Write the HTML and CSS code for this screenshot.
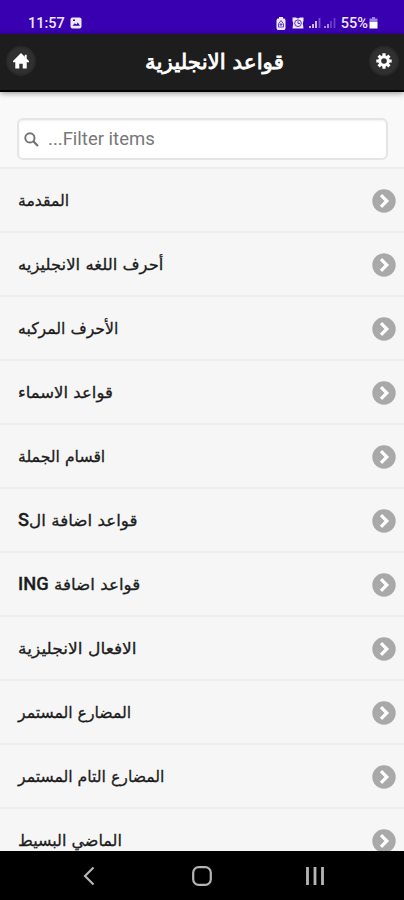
FILE: index.html
```html
<!DOCTYPE html>
<html lang="ar">
<head>
<meta charset="utf-8">
<title>قواعد الانجليزية</title>
<link rel="stylesheet" href="styles.css">
</head>
<body>
<svg class="defs" width="0" height="0" aria-hidden="true">
  <symbol id="go" viewBox="0 0 24 24"><circle cx="12" cy="12" r="11.7" fill="#a9a9a9"/><path d="M9 6.200l5.800 5.800L9 17.800" fill="none" stroke="#fff" stroke-width="3.200"/></symbol>
  <symbol id="signal" viewBox="0 0 13 12"><path d="M1 11V9M4 11V7" stroke="#d9cdf5" stroke-width="1.800"/><path class="upper" d="M7 11V4" stroke="currentColor" stroke-width="1.800"/><path d="M10.500 11V1" stroke="#7a52d2" stroke-width="1.800"/></symbol>
</svg>
<div class="phone">
  <div class="status">
    <span class="time">11:57</span>
    <svg class="photo" viewBox="0 0 12 12" width="12" height="12"><rect x=".5" y=".5" width="11" height="11" rx="2" fill="#eee8fc"/><path d="M2.500 8.800l2.300-2.600 1.500 1.400 1.600-2 2 3.200z" fill="#3a00b3"/><path d="M3 2.500h2v1.500H3z" fill="#3a00b3"/></svg>
    <span class="grow"></span>
    <svg class="saver" viewBox="0 0 10 13" width="10" height="13"><path d="M3 0h4v1.500h1.500L9.500 3v8.500L8.500 13h-7l-1-1.500V3l1-1.500H3z" fill="#eee8fc"/><path d="M5 3.500L2.500 7v3h5V7zM3.500 7.500h3M5 6v3" fill="none" stroke="#5930bd" stroke-width=".9"/></svg>
    <svg class="alarm" viewBox="0 0 12 12" width="12" height="12"><path d="M.5.500H4L6 1.500 8 .5h3.500V4l-.7 2 .7 5.500h-11L1.200 6 .5 4z" fill="#eee8fc"/><circle cx="6" cy="6.200" r="3.300" fill="none" stroke="#5930bd"/><path d="M6 4.200v2.300h2" fill="none" stroke="#5930bd"/></svg>
    <svg class="sig" width="13" height="12"><use href="#signal"/></svg>
    <svg class="sig weak" width="13" height="12"><use href="#signal"/></svg>
    <span class="pct">55%</span>
    <svg class="batt" viewBox="0 0 9 12" width="9" height="12"><path d="M3 0h3v1.500h2.500V5h-8V1.500H3z" fill="#9d80e0"/><path d="M.5 5h8v6.500h-8z" fill="#fff"/></svg>
  </div>
  <header class="bar">
    <span class="round"><svg viewBox="0 0 14 14" width="16" height="16"><path d="M7 0L0 7v1.200h2V13.500h3.500V9.500h3v4H12V8.200h2V7l-2-2V1.500h-1.700v1.700z" fill="#fff"/></svg></span>
    <h1 dir="rtl"><span>قواعد الانجليزية</span></h1>
    <span class="round"><svg viewBox="-8 -8 16 16" width="16" height="16"><circle r="4.300" fill="none" stroke="#fff" stroke-width="3"/><path d="M0-5V-7.700M0 5v2.700M-5 0h-2.700M5 0h2.700M-3.700-3.700l-1.700-1.700M3.700 3.700l1.700 1.700M3.700-3.700l1.700-1.700M-3.700 3.700l-1.700 1.700" stroke="#fff" stroke-width="3.200"/></svg></span>
  </header>
  <main>
    <div class="filter">
      <div class="field">
        <svg viewBox="0 0 14 14" width="15" height="15"><circle cx="5.500" cy="5.500" r="4.300" fill="none" stroke="#727272" stroke-width="1.800"/><path d="M8.700 8.700l4.300 4.300" stroke="#727272" stroke-width="2.100"/></svg>
        <span>...Filter items</span>
      </div>
    </div>
    <ul>
      <li><span class="snug" dir="rtl">المقدمة</span><svg><use href="#go"/></svg></li>
      <li><span class="wide" dir="rtl">أحرف اللغه الانجليزيه</span><svg><use href="#go"/></svg></li>
      <li><span class="snug" dir="rtl">الأحرف المركبه</span><svg><use href="#go"/></svg></li>
      <li><span class="wide" dir="rtl">قواعد الاسماء</span><svg><use href="#go"/></svg></li>
      <li><span class="snug" dir="rtl">اقسام الجملة</span><svg><use href="#go"/></svg></li>
      <li><span class="wider" dir="rtl">قواعد اضافة ال<b>S</b></span><svg><use href="#go"/></svg></li>
      <li><span class="wider" dir="rtl">قواعد اضافة <b>ING</b></span><svg><use href="#go"/></svg></li>
      <li><span class="widest" dir="rtl">الافعال الانجليزية</span><svg><use href="#go"/></svg></li>
      <li><span class="snug" dir="rtl">المضارع المستمر</span><svg><use href="#go"/></svg></li>
      <li><span class="snug" dir="rtl">المضارع التام المستمر</span><svg><use href="#go"/></svg></li>
      <li><span dir="rtl">الماضي البسيط</span><svg><use href="#go"/></svg></li>
    </ul>
  </main>
  <nav>
    <svg viewBox="0 0 12 20" width="12" height="20"><path d="M10.500 1.500L2 10l8.500 8.500" fill="none" stroke="#b5b5b5" stroke-width="2.200"/></svg>
    <svg viewBox="0 0 20 20" width="20" height="20"><rect x="1.200" y="1.200" width="17.600" height="17.600" rx="5.500" fill="none" stroke="#b5b5b5" stroke-width="2.200"/></svg>
    <svg viewBox="0 0 20 20" width="20" height="20"><path d="M2.500 1v18M10 1v18M17.500 1v18" stroke="#b5b5b5" stroke-width="2.800"/></svg>
  </nav>
</div>
</body>
</html>
```
FILE: styles.css
```css
* { box-sizing: border-box; }
body { margin: 0; font-family: Roboto, "DejaVu Sans", sans-serif; }
.defs { position: absolute; }
.phone { height: 900px; width: 404px; display: flex; flex-direction: column; overflow: hidden; background: #f9f9f9; }
.status { flex: none; height: 34px; background: #3900b2; color: #eee8fc; display: flex; align-items: center; padding: 12px 26px 0 28px; font-size: 14.5px; }
.grow { flex: 1; }
.time { font-weight: 500; }
.photo { margin-left: 5px; }
.saver { margin-right: 6px; }
.alarm { margin-right: 5px; }
.sig { margin-right: 2px; color: #d9cdf5; }
.weak { color: #7a52d2; opacity: .75; }
.pct { margin-left: 2px; font-size: 14.5px; font-weight: 500; }
.batt { margin-left: 1px; }
.bar { flex: none; height: 58px; background: #1d1d1d; border-bottom: 2px solid #000; box-shadow: 0 1px 6px rgba(0,0,0,.45); display: flex; align-items: center; padding: 0 5px 2px 6px; z-index: 1; }
.round { flex: none; width: 30px; height: 30px; border-radius: 50%; background: #303030; border: 2px solid #2a2a2a; display: flex; align-items: center; justify-content: center; }
.round svg { display: block; }
h1 { flex: 1; margin: 0; padding: 2px 0 0 24px; text-align: center; font: 400 20.5px/30px "DejaVu Sans", sans-serif; color: #fff; -webkit-text-stroke: .8px #fff; }
h1 span { display: inline-block; transform: scaleX(1.045); }
main { flex: 1; min-height: 0; overflow: hidden; }
.filter { height: 75px; padding: 26px 16px 7px 17px; }
.field { height: 42px; background: #fff; border: 2px solid #e5e5e5; border-radius: 6px; display: flex; align-items: center; padding-left: 5px; color: #777; font-size: 18.5px; box-shadow: inset 0 1px 2px rgba(0,0,0,.06); }
.field span { margin-left: 9px; line-height: 22px; margin-top: -1px; }
ul { list-style: none; margin: 0; padding: 0; }
li { height: 64px; background: #f6f6f6; border-top: 2px solid #eee; display: flex; align-items: center; justify-content: space-between; padding: 1px 8px 0 18px; font: 16px/24px "DejaVu Sans", sans-serif; color: #1c1c1c; }
li span { transform-origin: left; -webkit-text-stroke: .3px #1c1c1c; }
.snug { transform: scaleX(.98); }
.wide { transform: scaleX(1.03); }
.wider { transform: scaleX(1.045); }
.widest { transform: scaleX(1.07); }
li b { font: 500 17.5px/20px Roboto, sans-serif; }
li svg { width: 24px; height: 24px; }
nav { flex: none; height: 49px; background: #000; display: flex; align-items: center; justify-content: space-between; padding: 1px 79px 0 83px; }
nav svg:nth-child(2) { margin-left: 4px; }
```
